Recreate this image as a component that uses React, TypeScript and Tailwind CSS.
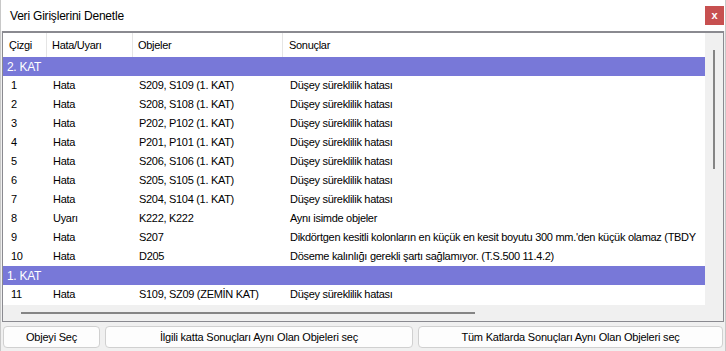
const rows: { kind: 'group' | 'row'; no?: string; type?: string; obj?: string; msg?: string; label?: string }[] = [
  { kind: 'group', label: '2. KAT' },
  { kind: 'row', no: '1', type: 'Hata', obj: 'S209, S109 (1. KAT)', msg: 'Düşey süreklilik hatası' },
  { kind: 'row', no: '2', type: 'Hata', obj: 'S208, S108 (1. KAT)', msg: 'Düşey süreklilik hatası' },
  { kind: 'row', no: '3', type: 'Hata', obj: 'P202, P102 (1. KAT)', msg: 'Düşey süreklilik hatası' },
  { kind: 'row', no: '4', type: 'Hata', obj: 'P201, P101 (1. KAT)', msg: 'Düşey süreklilik hatası' },
  { kind: 'row', no: '5', type: 'Hata', obj: 'S206, S106 (1. KAT)', msg: 'Düşey süreklilik hatası' },
  { kind: 'row', no: '6', type: 'Hata', obj: 'S205, S105 (1. KAT)', msg: 'Düşey süreklilik hatası' },
  { kind: 'row', no: '7', type: 'Hata', obj: 'S204, S104 (1. KAT)', msg: 'Düşey süreklilik hatası' },
  { kind: 'row', no: '8', type: 'Uyarı', obj: 'K222, K222', msg: 'Aynı isimde objeler' },
  {
    kind: 'row',
    no: '9',
    type: 'Hata',
    obj: 'S207',
    msg: "Dikdörtgen kesitli kolonların en küçük en kesit boyutu 300 mm.'den küçük olamaz (TBDY",
  },
  { kind: 'row', no: '10', type: 'Hata', obj: 'D205', msg: 'Döseme kalınlığı gerekli şartı sağlamıyor. (T.S.500 11.4.2)' },
  { kind: 'group', label: '1. KAT' },
  { kind: 'row', no: '11', type: 'Hata', obj: 'S109, SZ09 (ZEMİN KAT)', msg: 'Düşey süreklilik hatası' },
]

function Cell({ w, pl, children }: { w?: string; pl: string; children: React.ReactNode }) {
  return <div className={`${w ?? 'flex-1 min-w-0'} ${pl} shrink-0 whitespace-nowrap overflow-hidden`}>{children}</div>
}

const btn = 'h-[22px] bg-[#fdfdfd] border border-[#d0d0d0] rounded-[4px] whitespace-nowrap text-[11px] tracking-[-0.2px]'

export default function App() {
  return (
    <div
      className="w-[726px] h-[351px] bg-[#f0f0f0] flex flex-col text-[11px] tracking-[-0.3px] text-black overflow-hidden border-l border-r border-[#c8c8c8]"
      style={{ fontFamily: '"Liberation Sans", Arial, sans-serif' }}
    >
      {/* title */}
      <div className="h-[31px] bg-white flex items-center justify-between pl-[9px] pr-[1px] shrink-0">
        <span className="text-[12px] tracking-[-0.2px]">Veri Girişlerini Denetle</span>
        <button className="w-[19px] h-[19px] bg-[#c75050] text-white text-[11px] font-bold leading-none flex items-center justify-center tracking-normal">
          x
        </button>
      </div>

      {/* list */}
      <div className="ml-[1px] mr-[1px] h-[291px] border border-t-2 border-[#8a8a90] bg-[#f0f0f0] flex flex-col shrink-0">
        <div className="flex flex-1 min-h-0">
          <div className="w-[702px] bg-white overflow-hidden flex flex-col">
            {/* header */}
            <div className="h-[24px] flex items-center shrink-0">
              <div className="w-[44px] pl-[6px] h-full flex items-center border-r border-[#e5e5e5]">Çizgi</div>
              <div className="w-[86px] pl-[5px] h-full flex items-center border-r border-[#e5e5e5]">Hata/Uyarı</div>
              <div className="w-[150px] pl-[5px] h-full flex items-center border-r border-[#e5e5e5]">Objeler</div>
              <div className="flex-1 pl-[6px] h-full flex items-center">Sonuçlar</div>
            </div>
            {rows.map((r, i) =>
              r.kind === 'group' ? (
                <div
                  key={i}
                  className="h-[19px] bg-[#7878d8] text-white text-[12px] tracking-[-0.3px] pl-[4px] flex items-center shrink-0"
                >
                  {r.label}
                </div>
              ) : (
                <div key={i} className="h-[19px] flex items-center shrink-0">
                  <Cell w="w-[44px]" pl="pl-[8px]">{r.no}</Cell>
                  <Cell w="w-[86px]" pl="pl-[6px]">{r.type}</Cell>
                  <Cell w="w-[150px]" pl="pl-[6px]">{r.obj}</Cell>
                  <Cell pl="pl-[7px]">{r.msg}</Cell>
                </div>
              )
            )}
          </div>
          {/* vertical scrollbar */}
          <div className="w-[17px] bg-[#f0f0f0] flex justify-center pt-[17px]">
            <div className="w-[2px] h-[119px] bg-[#858585]" />
          </div>
        </div>
        {/* horizontal scrollbar */}
        <div className="h-[16px] flex items-center pl-[18px] shrink-0">
          <div className="w-[454px] h-[2px] bg-[#858585]" />
        </div>
      </div>

      {/* buttons */}
      <div className="flex gap-[5px] px-[2px] pt-[4px]">
        <button className={`${btn} w-[97px]`}>Objeyi Seç</button>
        <button className={`${btn} w-[308px]`}>İlgili katta Sonuçları Aynı Olan Objeleri seç</button>
        <button className={`${btn} flex-1`}>Tüm Katlarda Sonuçları Aynı Olan Objeleri seç</button>
      </div>
    </div>
  )
}
